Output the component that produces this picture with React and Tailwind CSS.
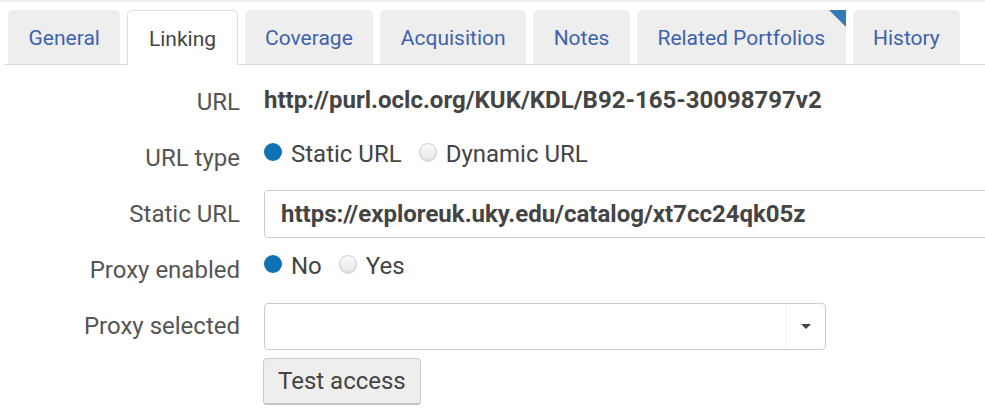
// Portfolio editor — Linking tab.

const tabs = ['General', 'Linking', 'Coverage', 'Acquisition', 'Notes', 'Related Portfolios', 'History'];

const Tab = ({ label, active, flagged }) => (
  <div
    className={`relative h-[54px] px-[20.5px] pt-1 flex items-center rounded-t-[5px] text-[21px] ${
      active
        ? 'bg-white border border-b-0 border-[#dddddd] text-[#444444] -mb-px h-[55px]'
        : 'bg-[#eeeeee] text-[#3e63ad]'
    }`}
  >
    {label}
    {flagged && (
      <span className="absolute top-0 right-0 w-0 h-0 border-t-[17px] border-l-[17px] border-t-[#337ab7] border-l-transparent" />
    )}
  </div>
);

const Radio = ({ checked, label }) => (
  <label className="flex items-center gap-[9px] mr-[17px] -mt-2">
    <span
      className={`w-[18px] h-[18px] rounded-full -mt-1 ${
        checked
          ? 'bg-[#0f72b6]'
          : 'border border-[#cfcfcf] bg-gradient-to-b from-[#fafafa] to-[#e6e6e6] shadow-[0_1px_1px_rgba(0,0,0,0.15)]'
      }`}
    />
    <span className="text-[24px] text-[#444444]">{label}</span>
  </label>
);

const Row = ({ label, children }) => (
  <div className="flex items-center h-14">
    <div className="w-[240px] text-right text-[24px] text-[#555555] whitespace-nowrap">{label}</div>
    <div className="flex-1 pl-6 flex items-center min-w-0">{children}</div>
  </div>
);

export default function App() {
  return (
    <div className="w-[985px] h-[414px] overflow-hidden bg-white border-t-2 border-[#f2f2f2]" style={{ fontFamily: 'Roboto, "Liberation Sans", sans-serif' }}>
      <div className="mt-2 ml-1 pl-1 flex items-end gap-[7px] border-b border-[#dddddd]">
        {tabs.map((t) => (
          <Tab key={t} label={t} active={t === 'Linking'} flagged={t === 'Related Portfolios'} />
        ))}
      </div>

      <div className="pt-[9px]">
        <Row label="URL">
          <span className="text-[24px] font-bold text-[#444444] -mt-1 whitespace-nowrap">http://purl.oclc.org/KUK/KDL/B92-165-30098797v2</span>
        </Row>
        <Row label="URL type">
          <Radio checked label="Static URL" />
          <Radio label="Dynamic URL" />
        </Row>
        <Row label="Static URL">
          <div className="h-[48px] w-[760px] shrink-0 border border-[#cccccc] rounded-[4px] px-4 flex items-center text-[24px] font-bold text-[#444444] whitespace-nowrap">
            https://exploreuk.uky.edu/catalog/xt7cc24qk05z
          </div>
        </Row>
        <Row label="Proxy enabled">
          <Radio checked label="No" />
          <Radio label="Yes" />
        </Row>
        <Row label="Proxy selected">
          <div className="h-[47px] w-[562px] border border-[#cccccc] rounded-[4px] flex justify-end">
            <div className="w-[40px] border-l border-[#f2f2f2] flex items-center justify-center">
              <span className="w-0 h-0 border-l-[5px] border-r-[5px] border-t-[5px] border-l-transparent border-r-transparent border-t-[#444444]" />
            </div>
          </div>
        </Row>
        <div className="pl-[263px] mt-1">
          <button className="h-[47px] px-[14px] bg-[#eeeeee] border border-[#cccccc] border-b-2 border-b-[#c4c4c4] rounded-[4px] text-[24px] text-[#444444]">
            Test access
          </button>
        </div>
      </div>
    </div>
  );
}
